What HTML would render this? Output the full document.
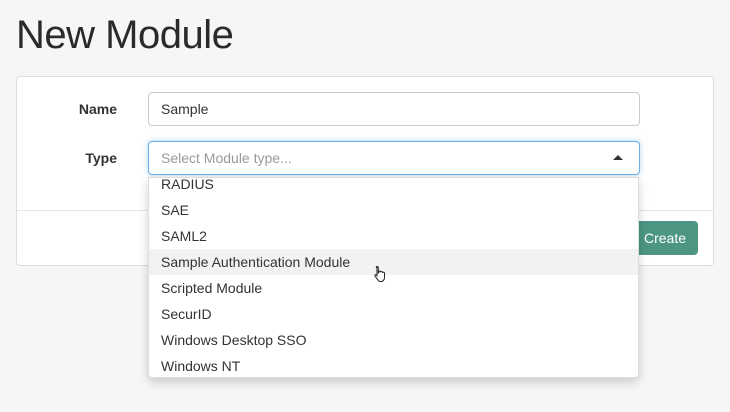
<!DOCTYPE html>
<html><head><meta charset="utf-8"><style>
*{box-sizing:border-box}
body{margin:0;width:730px;height:412px;background:#f6f6f6;font-family:"Liberation Sans",Arial,sans-serif;color:#333;position:relative;overflow:hidden}
h1{position:absolute;left:16px;top:12px;margin:0;font-size:40px;font-weight:300;color:#2a2a2a;line-height:46px;letter-spacing:-0.5px}
.panel{position:absolute;left:16px;top:76px;width:698px;height:190px;background:#fff;border:1px solid #ddd;border-radius:4px}
.sep{position:absolute;left:0;right:0;top:133px;border-top:1px solid #e5e5e5}
.lbl{position:absolute;width:101px;text-align:right;font-weight:bold;font-size:14px}
.inp{position:absolute;left:148px;width:492px;height:34px;border:1px solid #ccc;border-radius:4px;background:#fff;font-size:14px;padding:0 12px;line-height:32px}
.btn{position:absolute;left:620px;top:221px;width:78px;height:34px;background:#4d9684;border-radius:4px;color:#fff;font-size:14px;line-height:34px;text-align:right;padding-right:12px}
.dd{position:absolute;left:148px;top:177px;width:491px;height:201px;background:#fff;border:1px solid #ddd;border-radius:0 0 4px 4px;box-shadow:0 4px 10px rgba(0,0,0,.18);overflow:hidden}
.it{height:26px;line-height:26px;padding-left:12px;font-size:14px;color:#333}
</style></head><body>
<h1>New Module</h1>
<div class="panel"><div class="sep"></div></div>
<div class="lbl" style="left:16px;top:101px">Name</div>
<div class="lbl" style="left:16px;top:150px">Type</div>
<div class="inp" style="top:92px">Sample</div>
<div class="inp" style="top:141px;border-color:#66afe9;box-shadow:0 0 6px rgba(102,175,233,.5);color:#999">Select Module type...<span style="position:absolute;right:16px;top:13px;width:0;height:0;border-left:5px solid transparent;border-right:5px solid transparent;border-bottom:5px solid #333"></span></div>
<div class="btn">Create</div>
<div class="dd">
<div style="margin-top:-7px"></div>
<div class="it">RADIUS</div>
<div class="it">SAE</div>
<div class="it">SAML2</div>
<div class="it" style="background:#f2f2f2">Sample Authentication Module</div>
<div class="it">Scripted Module</div>
<div class="it">SecurID</div>
<div class="it">Windows Desktop SSO</div>
<div class="it">Windows NT</div>
</div>
<svg style="position:absolute;left:373px;top:265px" width="16" height="18" viewBox="0 0 16 18"><path d="M4 1.5c.8 0 1.3.5 1.3 1.3V8l.5-.2V6.5c.8-.6 1.8-.4 2 .4.7-.5 1.7-.3 1.9.5.8-.4 1.7 0 1.8.8v4c0 2-1 3.5-2.5 4.3H6.5C5 15.5 3.5 13 2 11c-.5-.8.3-1.7 1.2-1.1l.8.8V2.8C2.7 2 3.2 1.5 4 1.5z" fill="#fff" stroke="#222" stroke-width="1"/></svg>
</body></html>
